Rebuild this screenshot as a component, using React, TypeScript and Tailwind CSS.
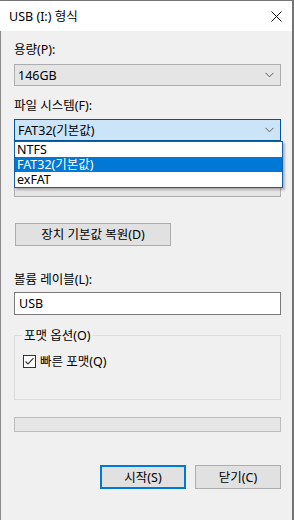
import React from 'react'

const font = { fontFamily: '"Noto Sans", "Noto Sans CJK KR", sans-serif' }

function Chevron() {
    return (
        <svg width="9" height="6" viewBox="0 0 9 6" className="shrink-0">
            <path d="M0.5 0.8 L4.5 4.8 L8.5 0.8" fill="none" stroke="#5a5a5a" strokeWidth="1" />
        </svg>
    )
}

function Combo({ value, active }: { value: string; active?: boolean }) {
    return (
        <div
            className={
                active
                    ? 'h-[22px] flex items-center justify-between pl-[3px] pr-[6px] border border-[#005499] bg-[#cce4f7]'
                    : 'h-[22px] flex items-center justify-between pl-[3px] pr-[6px] border border-[#adadad] bg-[#e5e5e5]'
            }
        >
            <span className="leading-[15px]">{value}</span>
            <Chevron />
        </div>
    )
}

export default function App() {
    const options = ['NTFS', 'FAT32(기본값)', 'exFAT']

    return (
        <div
            className="w-[294px] h-[520px] flex flex-col bg-[#f0f0f0] border-r-2 border-t border-[#747474] text-[12.5px] text-black"
            style={font}
        >
            {/* Title bar */}
            <div className="h-[30px] shrink-0 bg-white flex items-center justify-between pl-[9px] pr-[10px]">
                <span className="leading-[15px]">USB (I:) 형식</span>
                <svg width="11" height="11" viewBox="0 0 11 11">
                    <path d="M0.5 0.5 L10.5 10.5 M10.5 0.5 L0.5 10.5" stroke="#111" strokeWidth="1" />
                </svg>
            </div>

            {/* Body */}
            <div className="flex-1 flex flex-col pl-[13px] pr-[11px] border-l border-[#8a8a8a]">
                <div className="mt-[11px] leading-[15px]">용량(P):</div>
                <div className="mt-[7px]">
                    <Combo value="146GB" />
                </div>

                <div className="mt-[12px] leading-[15px]">파일 시스템(F):</div>
                <div className="mt-[6px] relative z-10">
                    <Combo value="FAT32(기본값)" active />
                    {/* open list */}
                    <div className="absolute left-0 top-[22px] w-[269px] border border-[#1460a8] bg-white shadow-[2px_2px_2px_rgba(0,0,0,0.25)]">
                        {options.map((o, i) => (
                            <div
                                key={o}
                                className={
                                    i === 1
                                        ? 'h-[15px] pl-[2px] leading-[15px] bg-[#0078d7] text-white'
                                        : 'h-[15px] pl-[2px] leading-[15px]'
                                }
                            >
                                {o}
                            </div>
                        ))}
                    </div>
                </div>

                {/* allocation size row, covered by the open list */}
                <div className="mt-[11px] h-[15px]" />
                <div className="mt-[8px] h-[22px] border border-[#adadad] bg-[#e5e5e5]" />

                <button className="mt-[26px] ml-[1px] w-[156px] h-[23px] border border-[#adadad] bg-[#e1e1e1] leading-[15px]">
                    장치 기본값 복원(D)
                </button>

                <div className="mt-[26px] leading-[15px]">볼륨 레이블(L):</div>
                <div className="mt-[5px] h-[23px] flex items-center pl-[4px] border border-[#7a7a7a] bg-white">
                    <span className="leading-[15px]">USB</span>
                </div>

                {/* Format options group */}
                <div className="mt-[20px] relative h-[65px] border border-[#dcdcdc]">
                    <span className="absolute left-[7px] -top-[8px] px-[2px] bg-[#f0f0f0] leading-[15px]">
                        포맷 옵션(O)
                    </span>
                    <div className="flex items-center gap-[4px] mt-[18px] ml-[8px]">
                        <svg width="13" height="13" viewBox="0 0 13 13">
                            <rect x="0.5" y="0.5" width="12" height="12" fill="#fff" stroke="#333" />
                            <path d="M2.5 6.5 L5 9 L10.5 3.2" fill="none" stroke="#333" strokeWidth="1.1" />
                        </svg>
                        <span className="leading-[15px]">빠른 포맷(Q)</span>
                    </div>
                </div>

                {/* Progress bar */}
                <div className="mt-[17px] h-[15px] border border-[#bcbcbc] bg-[#e6e6e6]" />

                <div className="mt-[33px] flex justify-end gap-[9px]">
                    <button className="w-[86px] h-[24px] border-2 border-[#0078d7] bg-[#e1e1e1] leading-[15px]">
                        시작(S)
                    </button>
                    <button className="w-[86px] h-[24px] border border-[#adadad] bg-[#e1e1e1] leading-[15px]">
                        닫기(C)
                    </button>
                </div>
            </div>
        </div>
    )
}
